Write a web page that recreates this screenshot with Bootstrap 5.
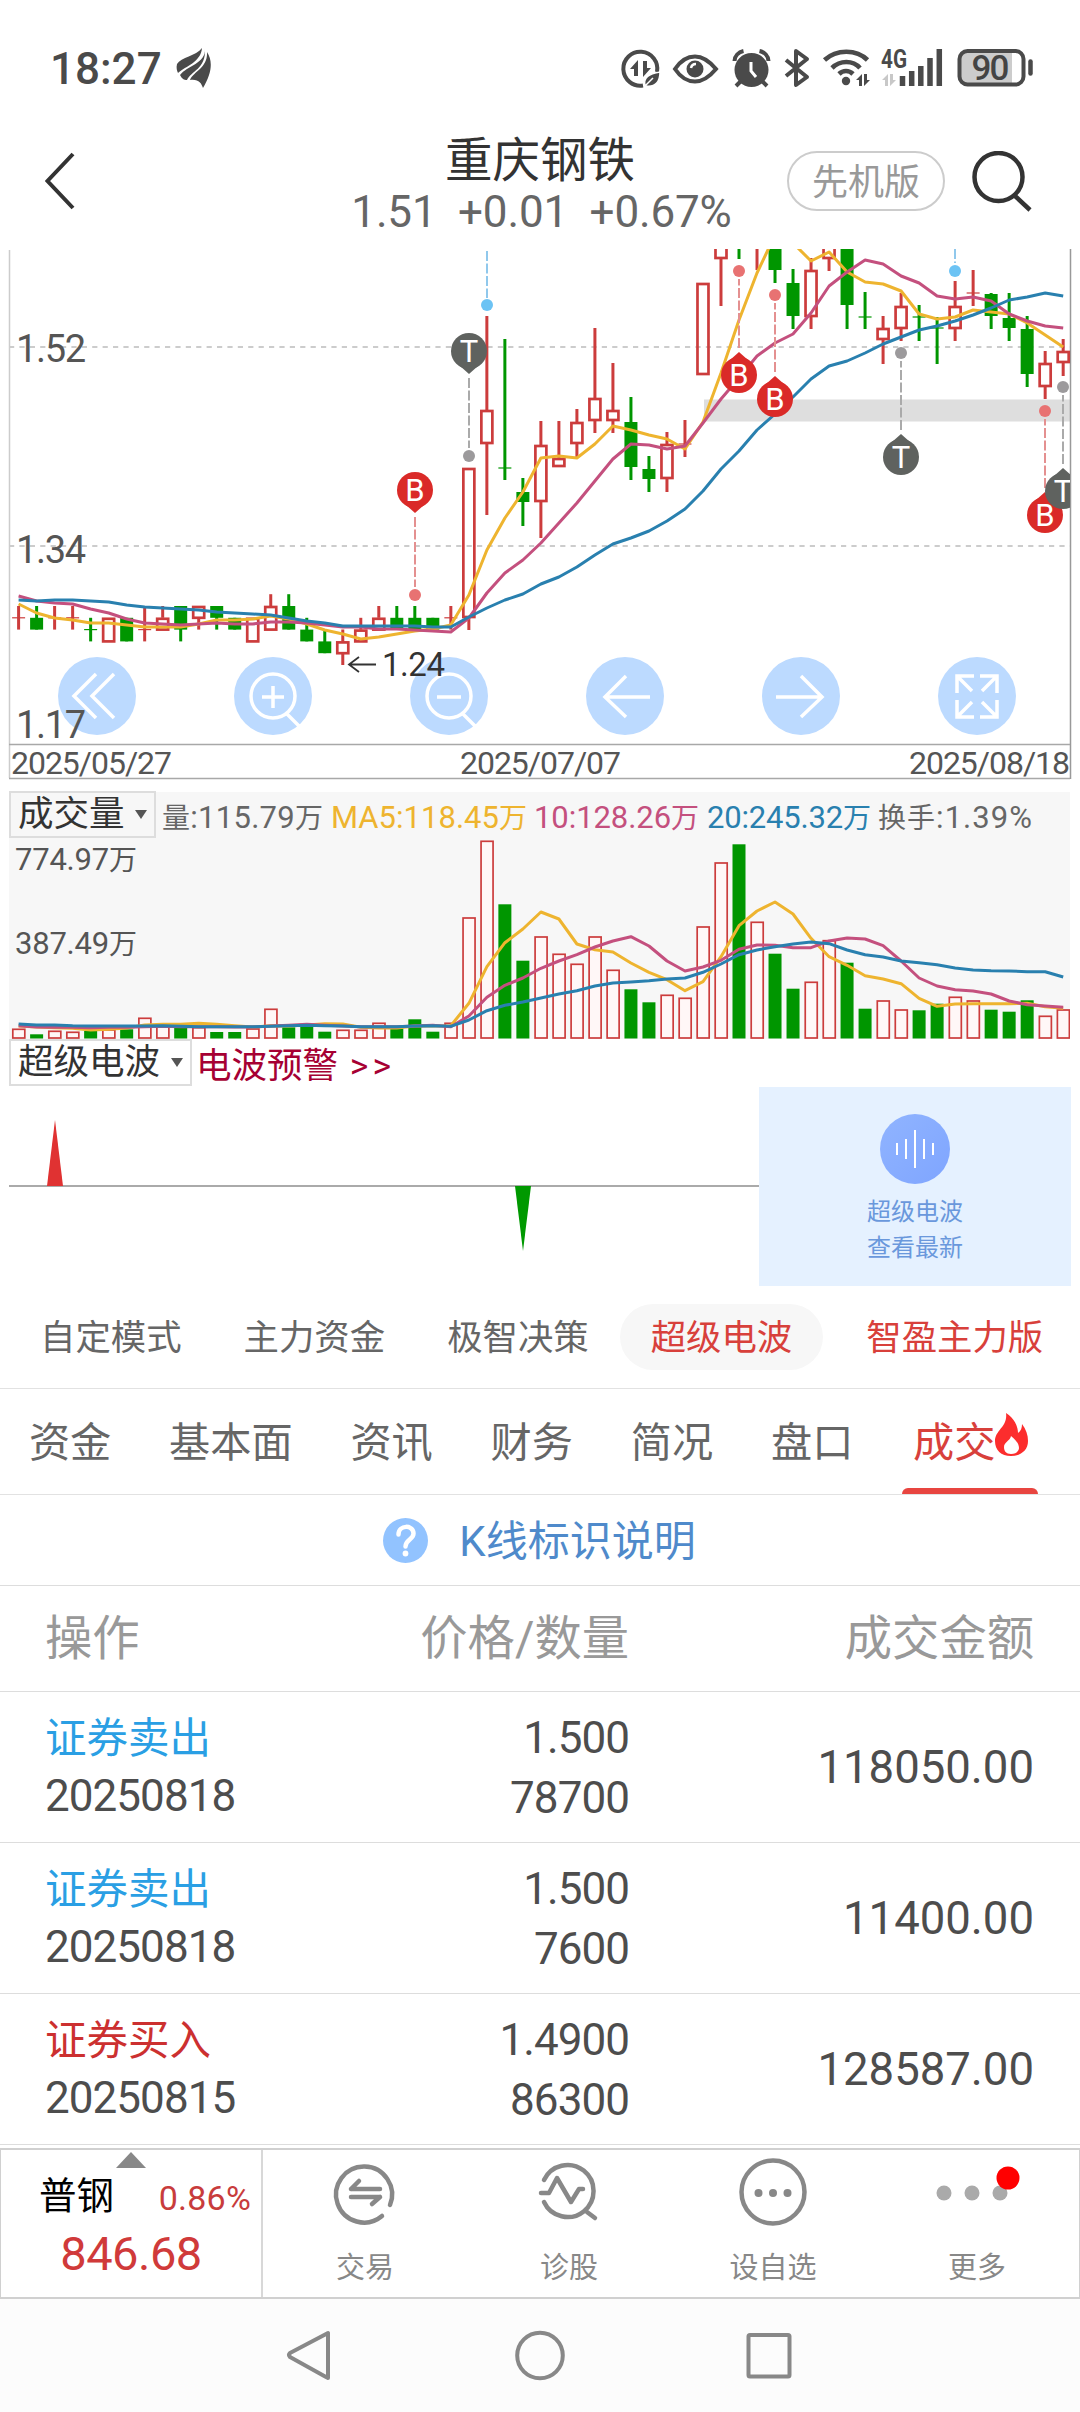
<!DOCTYPE html>
<html lang="zh-CN">
<head>
<meta charset="utf-8">
<meta name="viewport" content="width=device-width, initial-scale=1">
<title>重庆钢铁</title>
<link href="https://cdn.jsdelivr.net/npm/bootstrap@5.3.0/dist/css/bootstrap.min.css" rel="stylesheet">
<style>
  body { width: 1080px; height: 2412px; overflow: hidden; background: #fff; color: #4d4d4d; line-height: 1; font-family: Roboto, "Noto Sans CJK SC", sans-serif; }
  svg { display: block; overflow: hidden; }
  svg text { font-family: Roboto, "Noto Sans CJK SC", sans-serif; }
  .statusbar { height: 135px; padding: 0 44px 0 50px; }
  .clock { font-size: 44px; font-weight: 500; letter-spacing: 0; margin-right: 14px; width: 111px; color: #4a4a4a; padding-top: 2px; }
  .topbar { height: 114px; }
  .topbar-side { width: 340px; }
  .back-icon { margin: 17px 0 0 45px; }
  .stock-name { font-size: 47.5px; color: #333; margin-top: 3px; }
  .quote { font-size: 44px; color: #666; white-space: pre; letter-spacing: -.15px; margin: 4px 0 0 3px; }
  .search-gap { gap: 27px; padding-right: 48px; }
  .pro-pill { width: 158px; height: 60px; border: 2px solid #ccc; color: #999; font-size: 36px; padding-top: 3px; }
  .kchart { height: 543px; }
  .tools { left: 58px; right: 64px; top: 408px; z-index: 0; }
  .tool { width: 78px; height: 78px; background: #bcdaff; border: 0; }
  .kchart > svg { position: relative; z-index: 1; pointer-events: none; }
  .panel-volume { height: 247px; margin: 0 10px 0 9px; background: #f7f7f7; }
  .picker { border: 2px solid #ddd; height: 47px; font-size: 35.5px; color: #333; padding: 0 7px; }
  .caret-s { border: 6px solid transparent; border-top: 9px solid #555; border-bottom: 0; }
  .vol-label { z-index: 2; top: -1px; left: 0; width: 147px; }
  .wave-head { height: 48px; margin-left: 9px; }
  .wave-head .picker { width: 183px; background: #fff; }
  .wave-link { font-size: 35.5px; color: #a60033; margin: 2px 0 0 4px; }
  .wave-link b { font-weight: 400; letter-spacing: 4px; margin-left: 3px; }
  .wave-body { height: 200px; margin: 0 9px; }
  .wave-card { width: 312px; background: #e5f1ff; color: #6a98dc; font-size: 24px; padding-top: 27px; height: 199px; }
  .wave-card p { margin: 0 0 12px; }
  .modes { height: 102px; padding-left: 9px; font-size: 35.4px; color: #666; border-bottom: 1.5px solid #e2e2e2; }
  .modes span { padding: 0 31px; height: 66px; line-height: 68px; white-space: nowrap; margin-top: -1px; }
  .modes .chosen { background: #f7f7f7; }
  .modes .last-mode { margin-left: 12px; }
  .hot { color: #d8403b; }
  .sections { height: 106px; font-size: 41.2px; color: #666; border-bottom: 1.5px solid #e2e2e2; }
  .sections a { padding: 0 28.900px; color: inherit; text-decoration: none; height: 105px; line-height: 108px; white-space: nowrap; }
  .sections .current { position: relative; color: #d8403b; padding-right: 0; margin-left: 2px; }
  .sections .current::after { content: ""; position: absolute; left: 18px; width: 136px; bottom: 0; height: 6px; border-radius: 6px 6px 0 0; background: #e84540; }
  .flame { margin: 22px 0 0 -1px; }
  .explain { height: 91px; border-bottom: 1.5px solid #ddd; color: #4f8acb; font-size: 42px; gap: 31px; padding-right: 1px; }
  .trow { padding: 2px 46px 0 45px; border-bottom: 1.5px solid #ddd; height: 151px; }
  .trow-head { height: 106px; color: #999; font-size: 47.300px; }
  .c1 { width: 260px; } .c2 { width: 324px; text-align: right; white-space: nowrap; }
  .act { font-size: 41.5px; margin-bottom: 15px; }
  .num { font-size: 44px; letter-spacing: -.95px; }
  .amount { font-size: 45.500px; }
  .sell { color: #2a9fe4; } .buy { color: #cc3030; }
  .dock { height: 151px; border: 2px solid #d0d0d0; border-width: 2px 1px; margin-top: 3px; }
  .index-cell { width: 262px; border-right: 2px solid #d8d8d8; }
  .tri-up { border: 15px solid transparent; border-bottom: 16px solid #888; border-top: 0; margin-top: 2px; }
  .index-line { margin-top: 10px; padding-left: 38px; }
  .index-name { font-size: 37.500px; color: #000; }
  .index-pct { font-size: 34px; color: #c83c3c; padding: 0 10px 0 0; letter-spacing: .2px; margin-bottom: 1px; }
  .index-val { font-size: 47px; color: #d03a3a; letter-spacing: -.5px; margin-top: 14px; }
  .dock-item { font-size: 29px; color: #888; }
  .dock-item .cap { padding-top: 12px; }
  .sysnav { height: 114px; background: #fcfcfc; }
</style>
<script src="https://cdn.jsdelivr.net/npm/bootstrap@5.3.0/dist/js/bootstrap.bundle.min.js"></script>
</head>
<body>

<div class="statusbar d-flex align-items-center">
  <div class="clock">18:27</div>
  <svg width="37" height="42" viewBox="175 47 37 42" fill="#4a4a4a">
    <path d="M202 48C196 56 181 57 177 64c-1 4 0 7 1 9C186 66 201 62 202 48z"/>
    <path d="M205 49c1 14-18 17-25 26 2 4 4 5 7 5C191 71 206 69 205 49z"/>
    <path d="M207 52c6 9 5 21-4 36-2-5-4-9-13-8 4-9 18-12 17-28z"/>
  </svg>
  <svg class="ms-auto" width="418" height="44" viewBox="618 46 418 44" fill="none" stroke="#4a4a4a" stroke-width="4">
    <path d="M657 72a17 17 0 1 0-14 13.500"/>
    <path d="M630 69l8-9v16h-4v-7zM651 68l-8 9V61h4v7z" fill="#4a4a4a" stroke="none"/>
    <path d="M645 86c-2-9 4-12 15-14 0 9-4 16-15 14zM645 86l8-8" fill="#4a4a4a" stroke="#fff" stroke-width="1.500"/>
    <path d="M675 69c4-6 11-12.500 20-12.500S711 63 716 69c-5 6-12 12.500-21 12.500S679 75 675 69z"/>
    <circle cx="695" cy="69" r="8.500" fill="#4a4a4a" stroke="none"/><path d="M691 68a5 5 0 0 1 5-4" stroke="#fff" stroke-width="2.500"/>
    <circle cx="751.500" cy="70" r="17" fill="#4a4a4a" stroke="none"/>
    <path d="M751 62v9l5 6" stroke="#fff" stroke-width="3"/>
    <path d="M734.500 61c0-5 4-9 9-10M768.500 61c0-5-4-9-9-10M741 81l-5 5M762 81l5 5" stroke-width="4"/>
    <path d="M786 60l21 17-11 8V51l11 8-21 17" stroke-linejoin="round"/>
    <path d="M824.500 60c12-11 32-11 43 0M832 68c8-8 21-8 28 0M839 74c4-4 10-4 14 0" stroke-width="4.600"/>
    <circle cx="846" cy="81" r="4.200" fill="#4a4a4a" stroke="none"/>
    <path d="M856 80l6-6v12h-3v-6zM870 80l-6 6V74h3v6z" fill="#4a4a4a" stroke="none"/>
    <path d="M882 80l6-6v12h-3v-6zM896 80l-6 6V74h3v6z" fill="#c8c8c8" stroke="none"/>
    <text x="881" y="67.500" font-size="25" font-weight="700" fill="#4a4a4a" stroke="none" textLength="26" lengthAdjust="spacingAndGlyphs">4G</text>
    <path d="M902.500 76v10M911.700 71v15M920.800 66v20M930 58v28M939.300 49v37" stroke-width="5.500"/>
    <rect x="961" y="52" width="51" height="32" fill="#ccc" stroke="none"/>
    <rect x="959.500" y="51" width="64" height="33.500" rx="8"/>
    <text x="971.500" y="80" font-size="35" font-weight="500" fill="#444" stroke="none" textLength="38">90</text>
    <path d="M1030.500 61.500v12" stroke-width="4.500" stroke-linecap="round"/>
  </svg>
</div>

<header class="topbar d-flex">
  <div class="topbar-side">
    <svg class="back-icon" width="34" height="60" viewBox="46 152 34 60" fill="none" stroke="#333" stroke-width="4"><path d="M74 154L48.500 181 74 208"/></svg>
  </div>
  <div class="flex-grow-1 d-flex flex-column align-items-center">
    <div class="stock-name">重庆钢铁</div>
    <div class="quote">1.51  +0.01  +0.67%</div>
  </div>
  <div class="topbar-side search-gap d-flex justify-content-end pt-3">
    <div class="pro-pill rounded-pill d-flex align-items-center justify-content-center">先机版</div>
    <svg width="60" height="62" viewBox="972 151 60 62" fill="none" stroke="#333" stroke-width="4.500"><circle cx="998.500" cy="177" r="24"/><path d="M1014 195l16 15"/></svg>
  </div>
</header>

<section class="kchart position-relative">
  <div class="tools position-absolute d-flex justify-content-between">
    <button class="tool rounded-circle p-0"><svg width="78" height="78" viewBox="-39 -39 78 78" fill="none" stroke="#fff" stroke-width="3.500"><path d="M-1-22L-23 0-1 22M17-22L-5 0 17 22"/></svg></button>
    <button class="tool rounded-circle p-0"><svg width="78" height="78" viewBox="-39 -39 78 78" fill="none" stroke="#fff" stroke-width="3.500"><circle r="22"/><path d="M-11 1h22M0-10v22M14 18l12 12"/></svg></button>
    <button class="tool rounded-circle p-0"><svg width="78" height="78" viewBox="-39 -39 78 78" fill="none" stroke="#fff" stroke-width="3.500"><circle r="22"/><path d="M-12 1h24M14 18l12 12"/></svg></button>
    <button class="tool rounded-circle p-0"><svg width="78" height="78" viewBox="-39 -39 78 78" fill="none" stroke="#fff" stroke-width="3.500"><path d="M1-20L-20 1 1 21M-20 1h45"/></svg></button>
    <button class="tool rounded-circle p-0"><svg width="78" height="78" viewBox="-39 -39 78 78" fill="none" stroke="#fff" stroke-width="3.500"><path d="M0-20L21 1 0 21M21 1h-46"/></svg></button>
    <button class="tool rounded-circle p-0"><svg width="78" height="78" viewBox="-39 -39 78 78" fill="none" stroke="#fff" stroke-width="3.500"><path d="M-3-20h-17v17M-20-20l15 15M3-20h17v17M20-20L5-5M-3 21h-17V4M-20 21L-5 6M3 21h17V4M20 21L5 6"/></svg></button>
  </div>
  <svg id="kline" width="1080" height="543" viewBox="0 249 1080 543"></svg>
</section>

<section class="panel-volume position-relative">
  <div class="vol-label picker position-absolute d-flex align-items-center justify-content-between">成交量<i class="caret-s"></i></div>
  <svg id="volume" width="1061" height="247" viewBox="9 792 1061 247"></svg>
</section>

<section>
  <div class="wave-head d-flex">
    <div class="picker d-flex align-items-center justify-content-between">超级电波<i class="caret-s"></i></div>
    <div class="wave-link pt-2">电波预警 <b>&gt;&gt;</b></div>
  </div>
  <div class="wave-body d-flex">
    <svg width="750" height="200" viewBox="9 1087 750 200"><path d="M9 1186h750" stroke="#aaa" stroke-width="2"/><path d="M47 1186l8-66 8 66z" fill="#e03232"/><path d="M515 1186l8 65 8-65z" fill="#090"/></svg>
    <div class="wave-card d-flex flex-column align-items-center">
      <svg class="mb-3" width="70" height="70" viewBox="-35 -35 70 70"><defs><linearGradient id="wg" x2="1" y2="1"><stop stop-color="#90b4ff"/><stop offset="1" stop-color="#7fa5ff"/></linearGradient></defs><circle r="35" fill="url(#wg)"/><path d="M-18-6V6M-9-10v20M0-19v38M9-10v20M18-6V6" stroke="#fff" stroke-width="2"/></svg>
      <p>超级电波</p><p>查看最新</p>
    </div>
  </div>
</section>

<nav class="modes d-flex align-items-center">
  <span>自定模式</span><span>主力资金</span><span>极智决策</span><span class="chosen hot rounded-pill">超级电波</span><span class="hot last-mode">智盈主力版</span>
</nav>

<nav class="sections d-flex">
  <a href="#">资金</a><a href="#">基本面</a><a href="#">资讯</a><a href="#">财务</a><a href="#">简况</a><a href="#">盘口</a>
  <a href="#" class="current d-flex">成交<svg class="flame" width="33" height="46" viewBox="0 0 33 46"><path d="M11 2c8 5 12 13 12 20 3-2 4-5 4-9 4 5 6 11 6 17 0 9-7 15-17 15S0 39 0 30c0-11 13-14 11-28z" fill="#fc2d2d"/><path d="M16 25c5 4 8 8 8 12 0 3-3 6-8 6s-7-3-7-7c0-5 6-6 7-11z" fill="#fff"/></svg></a>
</nav>

<div class="explain d-flex align-items-center justify-content-center">
  <svg width="45" height="45" viewBox="-22.500 -22.500 45 45" fill="none"><circle r="22.500" fill="#92c3ff"/><path d="M-7-6c0-10 15-10 15-1C8-1 0-1 0 6" stroke="#fff" stroke-width="4.500" stroke-linecap="round"/><circle cy="13" r="2.900" fill="#fff"/></svg>
  <span class="pt-1">K线标识说明</span>
</div>

<div class="trow trow-head d-flex align-items-center"><div class="c1">操作</div><div class="c2">价格/数量</div><div class="ms-auto">成交金额</div></div>
<div class="trow d-flex align-items-center"><div class="c1"><div class="act sell">证券卖出</div><div class="num">20250818</div></div><div class="c2 num"><div class="mb-3">1.500</div><div>78700</div></div><div class="ms-auto amount">118050.00</div></div>
<div class="trow d-flex align-items-center"><div class="c1"><div class="act sell">证券卖出</div><div class="num">20250818</div></div><div class="c2 num"><div class="mb-3">1.500</div><div>7600</div></div><div class="ms-auto amount">11400.00</div></div>
<div class="trow d-flex align-items-center"><div class="c1"><div class="act buy">证券买入</div><div class="num">20250815</div></div><div class="c2 num"><div class="mb-3">1.4900</div><div>86300</div></div><div class="ms-auto amount">128587.00</div></div>

<footer class="dock d-flex">
  <div class="index-cell d-flex flex-column align-items-center">
    <i class="tri-up"></i>
    <div class="index-line d-flex align-items-end justify-content-between w-100"><span class="index-name">普钢</span><span class="index-pct">0.86%</span></div>
    <div class="index-val">846.68</div>
  </div>
  <div class="row g-0 flex-grow-1 text-center dock-item">
    <div class="col"><svg class="mx-auto" width="70" height="92" viewBox="330 2151 70 92" fill="none" stroke="#888" stroke-width="4.500" stroke-linecap="round" stroke-linejoin="round"><path d="M382 2217a28 28 0 1 1 8-11M351 2190h29M351 2190l8-8M380 2198h-29M380 2198l-8 7"/></svg><div class="cap">交易</div></div>
    <div class="col"><svg class="mx-auto" width="70" height="92" viewBox="534 2151 70 92" fill="none" stroke="#888" stroke-width="4.500" stroke-linecap="round" stroke-linejoin="round"><path d="M544 2181a26 26 0 1 1 0 22M541 2194h8l8-15 14 24 8-13h4M587 2213l8 6"/></svg><div class="cap">诊股</div></div>
    <div class="col"><svg class="mx-auto" width="70" height="92" viewBox="738 2151 70 92" fill="none" stroke="#888" stroke-width="4.500"><circle cx="773" cy="2193" r="31.500"/><g fill="#888" stroke="none"><circle cx="758.500" cy="2194" r="4"/><circle cx="773" cy="2194" r="4"/><circle cx="787.500" cy="2194" r="4"/></g></svg><div class="cap">设自选</div></div>
    <div class="col"><svg class="mx-auto" width="90" height="92" viewBox="932 2150 90 92" fill="#aaa"><circle cx="944" cy="2193" r="7.500"/><circle cx="972" cy="2193" r="7.500"/><circle cx="1000" cy="2193" r="7.500"/><circle cx="1008" cy="2178" r="11.500" fill="#f00"/></svg><div class="cap">更多</div></div>
  </div>
</footer>

<div class="sysnav"><svg width="1080" height="114" viewBox="0 2298 1080 114" fill="none" stroke="#888" stroke-width="4" stroke-linejoin="round"><path d="M328 2332v45q0 0-2-1l-36-20q-2-2 0-4z"/><circle cx="540" cy="2354.500" r="22.800"/><rect x="748.500" y="2334" width="41" height="41.500" rx="1.500"/></svg></div>

<script>
  // Day columns sit on an even pitch across the plot
  const X = i => 18.6 + i * 18.01;
  const RED = '#cc3c3c', GREEN = '#009600', MA = ['#eeb42f', '#c4507e', '#2980af'];
  // Quiet stretch, in cents above 1.24: colour, high, body top, body bottom, low
  const calm = ['r5443','g5433','r5443','r5443','g4332','r4422','g4422','r5332','r5433','g5532','r5543','g5543','g4433','r4422','r6533','g6533','g4322','g3211','r3210','r4322','r5433','g5433','g5433','g4433','r5443'];
  const lv = d => 665 - 11.8 * d;
  const candles = calm.map(c => [c[0], lv(+c[1]), lv(+c[2]), lv(+c[3]), lv(+c[4])]).concat([
    ['r',468,468,617,630],['r',316,410,443,515],['g',339,468,468,480],['g',478,492,502,526],['r',421,445,501,538],
    ['r',421,458,466,466],['r',409,422,443,457],['r',328,398,420,433],['r',363,410,420,433],['g',397,422,467,480],
    ['g',456,469,479,492],['r',432,444,478,492],['r',420,444,444,457],['r',283,283,374,374],['r',240,240,258,306],
    ['g',235,235,240,259],['r',235,235,240,270],['g',240,240,270,283],['g',269,283,316,329],['r',258,270,316,329],
    ['r',240,240,258,271],['g',240,240,305,329],['g',292,317,317,329],['r',316,328,339,364],['r',293,306,328,341],
    ['g',305,317,317,341],['g',317,328,328,364],['r',281,306,328,341],['r',270,293,293,306],['g',293,294,316,329],
    ['g',293,318,328,341],['g',316,329,374,387],['r',351,363,386,399],['r',339,351,362,376]]);
  const line = (v, c, w) => `<polyline fill="none" stroke="${c}" stroke-width="${w}" stroke-linejoin="round" points="${v.map((y, i) => X(i).toFixed(1) + ',' + y).join(' ')}"/>`;
  const pMA = [
    [604,613,618,620,623,623,625,627,627,627,624,620,620,619,616,619,624,630,634,639,637,634,631,629,625,595,550,518,492,458,456,458,444,426,430,435,439,449,422,373,320,273,235,243,261,252,272,282,284,291,314,319,317,310,312,314,323,335,347],
    [596,601,603,604,609,613,619,623,624,625,624,623,624,624,622,622,623,625,627,627,629,629,630,631,632,618,593,573,560,543,523,503,481,459,444,445,449,446,423,399,378,356,343,334,313,286,272,260,264,276,283,296,299,297,301,314,321,326,328],
    [600,601,600,600,601,602,605,607,608,609,610,612,613,614,615,618,621,623,626,626,626,626,626,627,627,617,608,600,594,584,577,567,555,544,538,531,521,509,491,469,451,430,414,397,379,366,361,353,344,337,330,326,321,315,308,300,297,293,296]];
  let s = `<rect x="704" y="399.500" width="366" height="22" fill="#dedede"/>
    <path d="M9.500 250v528" stroke="#ccc" stroke-width="1.500"/><path d="M1070.500 249v530" stroke="#999" stroke-width="1.500"/><path d="M9 744.500h1061M9 778.500h1061" stroke="#a8a8a8" stroke-width="1.500"/>
    <path d="M9 347h1061M9 546h1061" stroke="#ccc" stroke-width="1.800" stroke-dasharray="5.200 5.200"/>
    <g font-size="38" fill="#555">
    <text x="16" y="362" textLength="70">1.52</text><text x="16" y="562.500" textLength="70">1.34</text><text x="16" y="737.500" textLength="70">1.17</text></g>`;
  candles.forEach(([k, h, a, b, l], i) => {
    const x = X(i), c = k === 'r' ? RED : GREEN;
    if (Math.abs(a - b) < 2) s += `<path d="M${x} ${h}V${l}" stroke="${c}" stroke-width="3"/><path d="M${x - 6.500} ${a}h13" stroke="${c}" stroke-width="1.200"/>`;
    else if (k === 'r') s += `<path d="M${x} ${h}V${a}M${x} ${b}V${l}" stroke="${c}" stroke-width="3"/><rect x="${x - 5.500}" y="${a + 1}" width="11" height="${b - a - 1}" fill="none" stroke="${c}" stroke-width="2.700"/>`;
    else s += `<path d="M${x} ${h}V${l}" stroke="${c}" stroke-width="3"/><rect x="${x - 6.500}" y="${a}" width="13" height="${b - a}" fill="${c}"/>`;
  });
  pMA.forEach((v, n) => s += line(v, MA[n], 3));
  // Trade pins: letter, x, pin centre, tip direction, dot centre
  const K = { B: ['#da2a28', '#e87272', '#e49090'], T: ['#5f625f', '#9c9a9c', '#aaa'] };
  [['B',415,490,1,595],['T',469,351,1,456],['B',739,375,-1,271],['B',775,399,-1,295],['T',901,457,-1,353],['B',1045,515,-1,411],['T',1063,491,-1,387]].forEach(([t, x, y, d, q]) => {
    const [c, dot, dash] = K[t];
    s += `<svg x="0" y="249" width="1070" height="543" viewBox="0 249 1070 543"><path d="M${x} ${y + d * 27}V${q - d * 8}" stroke="${dash}" stroke-width="2" stroke-dasharray="10 2.500"/>
      <circle cx="${x}" cy="${q}" r="6" fill="${dot}"/><circle cx="${x}" cy="${y}" r="18" fill="${c}"/><path d="M${x - 9} ${y + d * 15}L${x} ${y + d * 23}L${x + 9} ${y + d * 15}z" fill="${c}"/>
      <text x="${x}" y="${y + 11}" font-size="31" fill="#fff" text-anchor="middle">${t}</text></svg>`;
  });
  s += `<path d="M487 251v47M955 249v14" stroke="#90c8ec" stroke-width="2" stroke-dasharray="10 2.500"/><circle cx="487" cy="305" r="6" fill="#6cc3f4"/><circle cx="955" cy="271" r="6" fill="#6cc3f4"/>
    <path d="M376 664.500h-27M359 657l-10 7.500 10 7.500" fill="none" stroke="#333" stroke-width="1.800"/><text x="382" y="675.500" font-size="33" fill="#333" textLength="63">1.24</text>
    <g font-size="32" fill="#555"><text x="11" y="774" textLength="161">2025/05/27</text><text x="460" y="774" textLength="161">2025/07/07</text><text x="909" y="774" textLength="161">2025/08/18</text></g>`;
  document.getElementById('kline').innerHTML = s;

  // Volume bars and their averages, in thirds of a pixel below the panel origin
  const Y = t => +(780 + t / 3).toFixed(1);
  const vol = 'r748 g763 r754 r757 g753 r750 g748 r715 r740 g742 r743 g756 g756 r747 r688 g742 g740 g755 r751 r751 r730 g745 g718 g755 r730 r414 r184 g373 g542 r471 r523 r553 r471 r571 g628 g667 r646 r655 r441 r249 g193 r427 g521 g626 r607 r482 g548 g686 r663 r690 g691 g671 r652 r663 g689 g695 g661 r709 r690'.split(' ');
  const vMA = [
    [738,741,743,745,750,748,744,735,733,733,730,733,737,741,737,738,735,731,732,742,744,744,738,738,737,670,560,488,447,396,417,492,509,516,549,577,599,632,605,530,437,393,366,402,475,530,556,587,597,611,655,679,672,671,671,671,670,680,685],
    [737,741,742,742,743,742,742,740,739,740,740,740,741,741,738,736,733,736,738,740,740,740,738,736,740,708,652,616,594,565,543,524,501,483,470,498,543,573,561,541,508,495,496,503,503,483,474,477,497,543,594,618,629,633,642,663,674,678,682],
    [732,735,735,737,738,738,738,738,737,739,740,740,740,740,739,737,736,737,738,740,740,740,738,737,739,720,692,676,666,654,642,632,618,609,606,602,597,594,577,552,524,510,500,492,486,491,510,524,531,543,548,554,564,570,572,573,575,575,591]];
  let v = '';
  vol.forEach((e, i) => {
    const y = Y(+e.slice(1)), x = X(i);
    v += e[0] === 'r' ? `<rect x="${x - 5.800}" y="${y}" width="12" height="${1038 - y}" fill="#fff7f7" stroke="${RED}" stroke-width="1.700"/>` : `<rect x="${x - 6.500}" y="${y}" width="13" height="${1038.500 - y}" fill="${GREEN}"/>`;
  });
  vMA.forEach((a, n) => v += line(a.map(Y), MA[n], 3));
  const label = (x, y, w, c, t) => `<text x="${x}" y="${y}" textLength="${w}" font-size="31" fill="${c}">${t.replace(/[\u4e00-\u9fff]+/g, m => `<tspan font-size="28">${m}</tspan>`)}</text>`;
  v += label(162, 828, 161, '#666', '量:115.79万') + label(331, 828, 196, MA[0], 'MA5:118.45万') + label(534, 828, 165, MA[1], '10:128.26万')
    + label(707, 828, 164, MA[2], '20:245.32万') + label(878, 828, 154, '#666', '换手:1.39%') + label(15, 870, 122, '#555', '774.97万') + label(15, 954, 122, '#555', '387.49万');
  document.getElementById('volume').innerHTML = v;
</script>
</body>
</html>
